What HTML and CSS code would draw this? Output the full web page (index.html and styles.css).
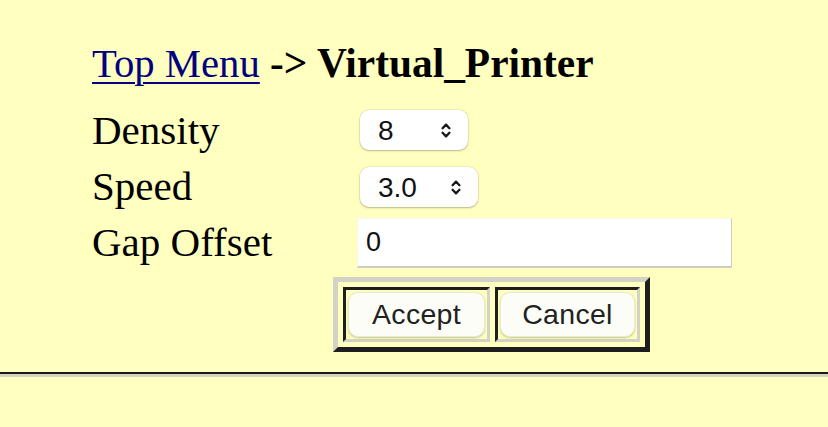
FILE: index.html
```html
<!DOCTYPE html>
<html>
<head>
<meta charset="utf-8">
<title>Virtual_Printer</title>
<link rel="stylesheet" href="styles.css">
</head>
<body>
<div class="page">
  <div class="crumb"><a href="#" class="crumb-link">Top Menu</a> <b class="crumb-current">-&gt; Virtual_Printer</b></div>
  <form class="form">
    <div class="row">
      <span class="label">Density</span>
      <span class="select select-density">
        <select class="select-native"><option>8</option></select>
        <svg class="chev" width="10" height="17" viewBox="0 0 10 17"><path d="M1.6 6.2 L5 2.6 L8.4 6.2 M1.6 10.8 L5 14.4 L8.4 10.8" fill="none" stroke="#1a1a1a" stroke-width="2.3" stroke-linecap="round" stroke-linejoin="round"/></svg>
      </span>
    </div>
    <div class="row">
      <span class="label">Speed</span>
      <span class="select select-speed">
        <select class="select-native"><option>3.0</option></select>
        <svg class="chev" width="10" height="17" viewBox="0 0 10 17"><path d="M1.6 6.2 L5 2.6 L8.4 6.2 M1.6 10.8 L5 14.4 L8.4 10.8" fill="none" stroke="#1a1a1a" stroke-width="2.3" stroke-linecap="round" stroke-linejoin="round"/></svg>
      </span>
    </div>
    <div class="row">
      <span class="label">Gap Offset</span>
      <input class="text-input" type="text" value="0">
    </div>
    <div class="actions">
      <table class="btn-table">
        <tr>
          <td class="btn-cell"><button type="button" class="btn btn-accept">Accept</button></td>
          <td class="btn-cell"><button type="button" class="btn btn-cancel">Cancel</button></td>
        </tr>
      </table>
    </div>
  </form>
</div>
<hr class="rule">
</body>
</html>
```

FILE: styles.css
```css
html, body {
  margin: 0;
  padding: 0;
  background: #ffffc0;
}
body {
  font-family: "Liberation Serif", "Times New Roman", serif;
  color: #000;
}
.page {
  padding: 40px 0 0 92px;
}
.crumb {
  font-size: 40.7px;
  line-height: 46px;
  height: 46px;
  white-space: nowrap;
}
.crumb-link {
  color: #000080;
  text-decoration: underline;
  text-decoration-thickness: 2px;
  text-underline-offset: 5px;
}
.crumb-current {
  font-size: 41.4px;
}
.form {
  margin: 16px 0 0 0;
}
.row {
  display: flex;
  align-items: center;
  height: 56px;
}
.label {
  width: 265px;
  font-size: 41px;
  line-height: 46px;
  white-space: nowrap;
}
.select {
  box-sizing: border-box;
  display: inline-flex;
  align-items: center;
  justify-content: space-between;
  height: 40px;
  margin-left: 3px;
  padding: 0 17px 0 18px;
  background: #fff;
  border-radius: 9px;
  box-shadow: 0 1px 2px rgba(80, 80, 40, 0.35), 0 0 0 0.5px rgba(120, 120, 80, 0.2);
}
.select-density { width: 108px; }
.select-speed { width: 118px; margin-top: 2px; }
.select-native {
  appearance: none;
  -webkit-appearance: none;
  border: none;
  background: transparent;
  padding: 0;
  margin: 0;
  font-family: "Liberation Sans", Arial, sans-serif;
  font-size: 28px;
  color: #111;
  outline: none;
}
.chev {
  display: block;
}
.text-input {
  box-sizing: border-box;
  width: 375px;
  height: 50px;
  margin: 2px 0 0 0;
  padding: 0 8px;
  border: 1px solid #f6f6ea;
  border-right-color: #cfcfc0;
  border-bottom: 2px solid #cfcfc0;
  background: #fff;
  font-family: "Liberation Sans", Arial, sans-serif;
  font-size: 27px;
  color: #111;
  outline: none;
}
.actions {
  margin: 7px 0 0 241px;
}
.btn-table {
  border-collapse: separate;
  border-spacing: 5px 5px;
  border-width: 5px;
  border-style: solid;
  border-color: #d2d2c6 #1e1e1e #1e1e1e #d2d2c6;
}
.btn-cell {
  padding: 2px;
  border-width: 3px;
  border-style: solid;
  border-color: #1e1e1e #d2d2c6 #d2d2c6 #1e1e1e;
}
.btn {
  box-sizing: border-box;
  display: block;
  height: 45px;
  padding: 0;
  border: 1px solid #ecebc8;
  border-radius: 10px;
  background: #fdfdf7;
  box-shadow: 0 1px 2px rgba(90, 90, 40, 0.35);
  font-family: "Liberation Sans", Arial, sans-serif;
  font-size: 28.5px;
  color: #222;
  letter-spacing: 0.3px;
}
.btn-accept { width: 137px; }
.btn-cancel { width: 135px; }
.rule {
  margin: 20px 0 0 0;
  height: 0;
  border: none;
  border-top: 2px solid #1a1a1a;
  border-bottom: 3px solid #d4d4c2;
}
```
